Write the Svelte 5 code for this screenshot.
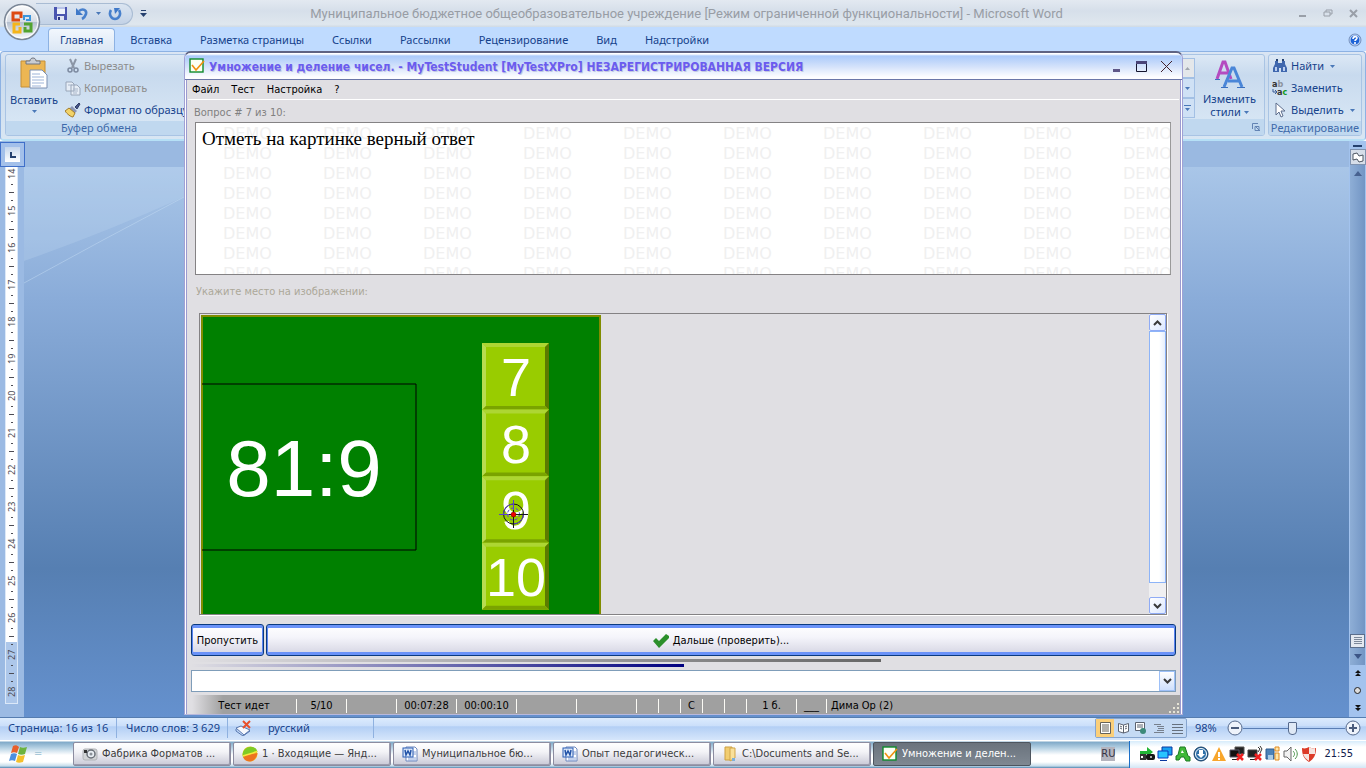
<script>
  const tabs = ['Главная', 'Вставка', 'Разметка страницы', 'Ссылки', 'Рассылки', 'Рецензирование', 'Вид', 'Надстройки'];
  const menu = ['Файл', 'Тест', 'Настройка', '?'];
  const rulerMarks = Array.from({ length: 15 }, (_, i) => 14 + i);
  const demos = Array.from({ length: 80 });
  const answers = [7, 8, 9, 10];

  const cells = [
    { text: 'Тест идет', width: 105 },
    { text: '5/10', width: 50 },
    { text: '', width: 50 },
    { text: '00:07:28', width: 60 },
    { text: '00:00:10', width: 60 },
    { text: '', width: 60 },
    { text: '', width: 60 },
    { text: '', width: 22 },
    { text: '', width: 22 },
    { text: 'С', width: 22 },
    { text: '', width: 22 },
    { text: '', width: 22 },
    { text: '1 б.', width: 50 },
    { text: '___', width: 30 }
  ];

  const tasks = [
    { icon: 'camera', text: 'Фабрика Форматов ...' },
    { icon: 'yandex', text: '1 · Входящие — Янд...' },
    { icon: 'word', text: 'Муниципальное бю...' },
    { icon: 'word', text: 'Опыт педагогическ...' },
    { icon: 'folder', text: 'C:\\Documents and Se...' },
    { icon: 'test', text: 'Умножение и делен...' }
  ];

  let activeTab = $state('Главная');
  let activeTask = $state(5);
  let zoom = $state(98);
  let timeUsed = $state(70);
  let done = $state(50);
</script>

{#snippet down()}
  <svg class="down" width="5" height="3" viewBox="0 0 5 3"><path d="M0 0h5L2.500 3z" fill="#4a78b8" /></svg>
{/snippet}

{#snippet testIcon()}
  <svg width="16" height="16" viewBox="0 0 16 16">
    <rect x="1" y="1" width="13" height="13" fill="#fbfff4" stroke="#0f8a2c" stroke-width="1.400" />
    <path d="M3 7l4 5 8-9" fill="none" stroke="#f09010" stroke-width="1.600" />
  </svg>
{/snippet}

{#snippet chevron(d)}
  <svg width="9" height="6" viewBox="0 0 9 6"><path {d} fill="none" stroke="#3a3a3a" stroke-width="2" /></svg>
{/snippet}

<div class="desktop">
  <section class="word">
    <header class="word-title">
      <div class="quick">
        <button aria-label="Сохранить">
          <svg width="15" height="15" viewBox="0 0 15 15">
            <path d="M1 1h13v13H2L1 13z" fill="#4a55b0" />
            <path d="M4 1h8v7H4z" fill="#eef2fb" /><path d="M4 1h8v2H4z" fill="#b9c4e8" />
            <path d="M4 10h7v4H4z" fill="#dde2f2" /><path d="M5 11h2v3H5z" fill="#2b3580" />
          </svg>
        </button>
        <button aria-label="Отменить">
          <svg width="14" height="14" viewBox="0 0 14 14">
            <path d="M4 4c4-3 8-1 7 3-1 3-2 4-4 5" fill="none" stroke="#4880cc" stroke-width="2.600" />
            <path d="M1 1v7h7z" fill="#3f78c8" />
          </svg>
        </button>
        {@render down()}
        <button aria-label="Повторить">
          <svg width="14" height="14" viewBox="0 0 14 14">
            <path d="M3 3c-3 5 1 9 4 9s7-4 4-9" fill="none" stroke="#4880cc" stroke-width="2.600" />
            <path d="M6 1h6L7 7z" fill="#3f78c8" />
          </svg>
        </button>
      </div>
      <svg class="more" width="7" height="7" viewBox="0 0 7 7"><path d="M1 0h5v1H1zM0 3h7L3.500 7z" fill="#26406e" /></svg>
      <h1>Муниципальное бюджетное общеобразовательное учреждение [Режим ограниченной функциональности] - Microsoft Word</h1>
      <div class="word-buttons">
        <button aria-label="Свернуть"><svg width="9" height="9" viewBox="0 0 9 9"><path d="M1 6h7v2H1z" fill="#999fa8" /></svg></button>
        <button aria-label="Восстановить"><svg width="10" height="9" viewBox="0 0 10 9"><path d="M3 3V1h6v4H7M1 3h6v4H1z" fill="none" stroke="#999fa8" /></svg></button>
        <button aria-label="Закрыть"><svg width="9" height="9" viewBox="0 0 9 9"><path d="M1 1l7 7M8 1L1 8" stroke="#999fa8" stroke-width="2" /></svg></button>
      </div>
    </header>

    <button class="orb" aria-label="Office">
      <svg width="38" height="38" viewBox="0 0 38 38">
        <defs>
          <linearGradient id="orb" x2="0" y2="1">
            <stop offset="0" stop-color="#fdfdfd" /><stop offset=".5" stop-color="#d5dbe4" />
            <stop offset=".51" stop-color="#b5c0cf" /><stop offset="1" stop-color="#fafcff" />
          </linearGradient>
        </defs>
        <circle cx="19" cy="19" r="17.500" fill="url(#orb)" stroke="#7b8797" stroke-width="1.500" />
        <circle cx="19" cy="19" r="16" fill="none" stroke="#fff" />
        <path d="M17 17H10V10h8v5" fill="none" stroke="#dd4a12" stroke-width="3" />
        <path d="M21 17v-4h6v4h-4" fill="none" stroke="#3c95dc" stroke-width="2" />
        <path d="M17 21h-6v8h6v-5" fill="none" stroke="#f5b51b" stroke-width="3" />
        <path d="M21 21h7v7h-6v-4" fill="none" stroke="#52a32f" stroke-width="3" />
      </svg>
    </button>

    <nav class="tabs">
      {#each tabs as tab}
        <button class:active={tab === activeTab} onclick={() => (activeTab = tab)}>{tab}</button>
      {/each}
      <button class="help" aria-label="Справка">
        <svg width="14" height="14" viewBox="0 0 14 14">
          <circle cx="7" cy="7" r="6" fill="#1c62d6" stroke="#7c93b8" />
          <circle cx="7" cy="7" r="5" fill="none" stroke="#d8e6fb" />
          <path d="M5 6c0-3 4-3 4-1 0 1.500-2 1.500-2 3M7 9v2" fill="none" stroke="#fff" stroke-width="1.600" />
        </svg>
      </button>
    </nav>

    <div class="ribbon">
      <div class="group clipboard">
        <div class="tools">
          <button class="big">
            <svg width="30" height="34" viewBox="0 0 30 34">
              <path d="M2 4h24v26H2z" fill="#ecb653" stroke="#c58f36" />
              <path d="M7 7V4h4c0-4 6-4 6 0h4v3z" fill="#c9ccd2" stroke="#6f7581" />
              <path d="M11 13h12l5 5v13H11z" fill="#fff" stroke="#7b8fb2" />
              <path d="M13 17h8M13 20h12M13 23h12M13 26h12M13 29h9" stroke="#9db4d8" />
            </svg>
            <span>Вставить</span>
            {@render down()}
          </button>
          <div class="rows">
            <button class="off">
              <svg width="16" height="16" viewBox="0 0 16 16">
                <path d="M5 1l4 9M11 1L7 10" stroke="#8c96a6" stroke-width="2" />
                <circle cx="5" cy="12" r="2" fill="none" stroke="#7d8aa0" stroke-width="1.500" /><circle cx="11" cy="12" r="2" fill="none" stroke="#7d8aa0" stroke-width="1.500" />
              </svg>Вырезать
            </button>
            <button class="off">
              <svg width="16" height="16" viewBox="0 0 16 16">
                <path d="M1 2h6l2 2v7H1zM6 5h6l3 3v7H6z" fill="#e6edf6" stroke="#98a5b8" />
                <path d="M3 5h4M8 9h5M8 11h5M8 13h4" stroke="#a9b6c9" />
              </svg>Копировать
            </button>
            <button>
              <svg width="16" height="16" viewBox="0 0 16 16">
                <path d="M10 5l4-4 1 1-3 5z" fill="#45568a" stroke="#313d66" /><path d="M7 4l5 5-2 2-6-4z" fill="#8b95b5" />
                <path d="M4 6l6 5-2 4c-2 0-6-3-8-6z" fill="#f2d369" stroke="#a27b28" />
              </svg>Формат по образцу
            </button>
          </div>
        </div>
        <div class="caption">Буфер обмена</div>
      </div>

      <div class="group styles">
        <div class="tools">
          <div class="gallery">
            <button aria-label="Вверх"><svg width="5" height="3" viewBox="0 0 5 3"><path d="M0 3h5L2.500 0z" fill="#a0a6ae" /></svg></button>
            <button aria-label="Вниз">{@render down()}</button>
            <button aria-label="Ещё"><svg width="7" height="6" viewBox="0 0 7 6"><path d="M0 0h7v1H0zM1 3h5L3.500 6z" fill="#4a78b8" /></svg></button>
          </div>
          <button class="big">
            <svg width="30" height="32" viewBox="0 0 30 32">
              <path d="M2 21L8 4h2l6 17M5 15h9" fill="none" stroke="#b44bc0" stroke-width="3" />
              <path d="M9 29l8-19h2l8 19M13 23h11" fill="none" stroke="#4a86d8" stroke-width="3" />
              <path d="M6 29.500h7M22 29.500h8M0 21.500h5" stroke="#3a70c0" />
            </svg>
            <span>Изменить</span>
            <span>стили {@render down()}</span>
          </button>
        </div>
        <div class="caption">
          <svg width="8" height="8" viewBox="0 0 8 8"><path d="M.5 6V.5H6M3 3.500h4v4H3zM4 4l4 4" fill="none" stroke="#6384b4" /></svg>
        </div>
      </div>

      <div class="group editing">
        <div class="rows">
          <button>
            <svg width="16" height="16" viewBox="0 0 16 16">
              <path d="M3 3h3v2h4V3h3v3l2 4v4H9v-4H7v4H1v-4l2-4z" fill="#3f67ae" /><path d="M4 1h2v2H4zM10 1h2v2h-2z" fill="#23406f" /><path d="M3 9h2v4H3zM11 9h2v4h-2z" fill="#b9cdf0" />
            </svg>Найти {@render down()}
          </button>
          <button>
            <svg width="16" height="16" viewBox="0 0 16 16">
              <text x="0" y="7" class="ab">a<tspan fill="#8b929c">b</tspan></text>
              <text x="5" y="15" class="ab">a<tspan fill="#159a1f">c</tspan></text>
              <path d="M1 9v3h3M3 10l2 2-2 2" fill="none" stroke="#3b5a94" />
            </svg>Заменить
          </button>
          <button>
            <svg width="16" height="16" viewBox="0 0 16 16"><path d="M4 1v12l3-3 2 5 2-1-2-5h4z" fill="#fff" stroke="#5d6d8c" /></svg>Выделить {@render down()}
          </button>
        </div>
        <div class="caption">Редактирование</div>
      </div>
    </div>

    <div class="document">
      <div class="left-strip">
        <button class="tab-stop" aria-label="Табуляция"><svg width="6" height="6" viewBox="0 0 6 6"><path d="M1 0v5h5" fill="none" stroke="#24406e" stroke-width="2" /></svg></button>
        <div class="ruler">
          {#each rulerMarks as mark}
            <span class="number">{mark}</span>
            {#if mark < 28}
              <i class="dot"></i><i class="dash"></i><i class="dot"></i>
            {/if}
          {/each}
        </div>
      </div>
      <div class="canvas">
        <svg width="160" height="120" viewBox="0 0 160 120">
          <path d="M0 94Q80 66 160 30V0H0z" fill="#c3dbf4" opacity=".25" />
          <path d="M0 116Q80 72 160 30" fill="none" stroke="#c4dcf4" opacity=".5" />
        </svg>
      </div>
      <div class="right-strip">
        <i class="split"></i>
        <button class="browse" aria-label="Линейка"><svg width="12" height="11" viewBox="0 0 12 11"><path d="M1 2l4-1 2 3 4-1v6l-4 1-2-3-4 1z" fill="#fff" stroke="#4d5662" /></svg></button>
        <div class="track">
          <svg width="8" height="5" viewBox="0 0 8 5"><path d="M0 5h8L4 0z" fill="#47618f" /></svg>
          <button class="thumb" aria-label="Прокрутка"><svg width="8" height="8" viewBox="0 0 8 8"><path d="M0 .5h8M0 2.500h8M0 4.500h8M0 6.500h8" stroke="#7c889a" /></svg></button>
          <svg width="8" height="5" viewBox="0 0 8 5"><path d="M0 0h8L4 5z" fill="#3c5586" /></svg>
        </div>
        <div class="pages">
          <svg width="6" height="7" viewBox="0 0 6 7"><path d="M0 3h6L3 0zM0 6h6L3 3z" fill="#111" /></svg>
          <svg width="7" height="7" viewBox="0 0 7 7"><circle cx="3.500" cy="3.500" r="3" fill="#ddd" stroke="#222" /></svg>
          <svg width="6" height="7" viewBox="0 0 6 7"><path d="M0 1h6L3 4zM0 4h6L3 7z" fill="#111" /></svg>
        </div>
      </div>
    </div>

    <footer class="word-status">
      <span class="page">Страница: 16 из 16</span>
      <span class="words">Число слов: 3 629</span>
      <span class="lang">
        <svg width="17" height="16" viewBox="0 0 17 16">
          <path d="M1 8l5-2 9 4-6 5z" fill="#f6f8fd" stroke="#5776ae" /><path d="M1 9v2l7 5 7-5" fill="none" stroke="#5776ae" />
          <path d="M8 1l7 7M15 1L8 8" stroke="#e8502c" stroke-width="2" />
        </svg>
        русский
      </span>
      <div class="views">
        <button class="on" aria-label="Разметка страницы"><svg width="11" height="12" viewBox="0 0 11 12"><path d="M.5.5h10v11H.5zM2 3h7M2 5h7M2 7h7M2 9h7" fill="#fff" stroke="#66625a" /></svg></button>
        <button aria-label="Режим чтения"><svg width="11" height="12" viewBox="0 0 11 12"><path d="M.5 1.500L5.500 3l5-1.500v8L5.500 11l-5-1.500zM5.500 3v8M2 4l2 1M2 6l2 1M7 5l2-1M7 7l2-1" fill="#fff" stroke="#5b6270" /></svg></button>
        <button aria-label="Веб-документ"><svg width="12" height="12" viewBox="0 0 12 12"><path d="M.5.5h9v8h-9zM2 3h6M2 5h6" fill="#fff" stroke="#5b6270" /><circle cx="8" cy="9" r="3" fill="#3d8a7a" /></svg></button>
        <button aria-label="Структура"><svg width="11" height="11" viewBox="0 0 11 11"><path d="M0 1.500h7M3 3.500h7M4 5.500h6M3 7.500h7M0 9.500h10" stroke="#77808d" fill="none" /></svg></button>
        <button aria-label="Черновик"><svg width="11" height="11" viewBox="0 0 11 11"><path d="M0 1.500h11M0 4.500h11M0 7.500h11M0 10.500h11" stroke="#66707e" fill="none" /></svg></button>
      </div>
      <span class="percent">98%</span>
      <button class="round" aria-label="Уменьшить"><svg width="16" height="16" viewBox="0 0 16 16"><circle cx="8" cy="8" r="7" fill="#eef3fb" stroke="#55698c" /><path d="M4 8h8" stroke="#4b5c7c" stroke-width="2" /></svg></button>
      <input class="zoom" type="range" min="10" max="190" aria-label="Масштаб" bind:value={zoom} />
      <button class="round" aria-label="Увеличить"><svg width="16" height="16" viewBox="0 0 16 16"><circle cx="8" cy="8" r="7" fill="#eef3fb" stroke="#55698c" /><path d="M4 8h8M8 4v8" stroke="#4b5c7c" stroke-width="2" /></svg></button>
    </footer>
  </section>

  <section class="test">
    <header class="test-title">
      {@render testIcon()}
      <h2>Умножение и деление чисел. - MyTestStudent [MyTestXPro] НЕЗАРЕГИСТРИРОВАННАЯ ВЕРСИЯ</h2>
      <button aria-label="Свернуть"><svg width="13" height="13" viewBox="0 0 13 13"><path d="M3 9h7v3H3z" fill="#5f5788" /></svg></button>
      <button aria-label="Развернуть"><svg width="13" height="13" viewBox="0 0 13 13"><path d="M1.500 1.500h10v10h-10z" fill="none" stroke="#15152e" /><path d="M1 1h11v3H1z" fill="#4a4478" /></svg></button>
      <button aria-label="Закрыть"><svg width="13" height="13" viewBox="0 0 13 13"><path d="M1 1l11 11M12 1L1 12" stroke="#43222c" /></svg></button>
    </header>

    <nav class="menu">
      {#each menu as item}
        <button>{item}</button>
      {/each}
    </nav>

    <main>
      <p class="count">Вопрос # 7 из 10:</p>
      <div class="question">
        <div class="demos" aria-hidden="true">
          {#each demos as _}
            <span>DEMO</span>
          {/each}
        </div>
        <p>Отметь на картинке верный ответ</p>
      </div>
      <p class="hint">Укажите место на изображении:</p>

      <div class="picture">
        <svg class="board" width="400" height="299" viewBox="0 0 400 299">
          <rect width="400" height="310" fill="#808c00" />
          <rect x="2" y="2" width="396" height="300" fill="#008000" />
          <path d="M1 69h214v166H1" fill="none" stroke="#000" />
          <text x="103" y="181" class="task">81:9</text>
          {#each answers as answer, i}
            <g transform="translate(281 {28 + i * 66.6})">
              <rect width="67" height="67" fill="#99cc00" />
              <path d="M0 0h67l-4 4H4z" fill="#add633" />
              <path d="M0 0l4 4v59l-4 4z" fill="#b8dc50" />
              <path d="M67 0v67l-4-4V4z" fill="#5c7a00" />
              <path d="M0 67l4-4h59l4 4z" fill="#7aa300" />
              <text x="34" y="53" class="answer">{answer}</text>
            </g>
          {/each}
          <g fill="none" stroke="#15151f">
            <circle cx="312.500" cy="199" r="10" /><circle cx="312.500" cy="199" r="10" stroke="#5a3fd0" stroke-dasharray="16 15" />
            <circle cx="312.500" cy="199" r="6" stroke="#5a3fd0" stroke-dasharray="3 2" />
            <path d="M298 199.500h29M312.500 185v28" />
            <path d="M298 199.500h10M312.500 185v10" stroke="#5a3fd0" />
          </g>
          <circle cx="312.500" cy="199.500" r="2.500" fill="#f00000" stroke="#500" stroke-width=".5" />
        </svg>
        <div class="scroll">
          <button aria-label="Вверх">{@render chevron('M1 5l3.500-3.500L8 5')}</button>
          <div class="bar"></div>
          <button aria-label="Вниз">{@render chevron('M1 1l3.500 3.500L8 1')}</button>
        </div>
      </div>

      <div class="actions">
        <button>Пропустить</button>
        <button class="next">
          <svg width="16" height="14" viewBox="0 0 16 14"><path d="M0 7l3-3 3 3 7-7 3 2v2L6 14z" fill="#2b8f2b" /></svg>
          Дальше (проверить)...
        </button>
      </div>

      <div class="bars">
        <div class="time" style="width: {timeUsed}%"></div>
        <div class="done" style="width: {done}%"></div>
      </div>

      <div class="combo">
        <select aria-label="Сообщения"><option></option></select>
        <span>{@render chevron('M1 1l3.500 3.500L8 1')}</span>
      </div>
    </main>

    <footer class="test-status">
      {#each cells as cell}
        <span class="cell" style="width: {cell.width}px">{cell.text}</span>
      {/each}
      <span class="student">Дима Ор (2)</span>
      <svg width="12" height="12" viewBox="0 0 12 12"><path d="M9 1h2v2H9zM9 5h2v2H9zM5 5h2v2H5zM9 9h2v2H9zM5 9h2v2H5zM1 9h2v2H1z" fill="#e6e4d6" /></svg>
    </footer>
  </section>

  <footer class="taskbar">
    <button class="start" aria-label="Пуск">
      <svg width="20" height="18" viewBox="0 0 20 18">
        <path d="M4 1c2-1 4-1 6 1L8 8C6 7 4 7 2 8z" fill="#e8602c" /><path d="M11 2c2 1 4 1 7 0l-2 7c-2 1-5 1-7 0z" fill="#6db33f" />
        <path d="M2 9c2-1 4-1 6 0l-2 7c-2-1-4-1-6 0z" fill="#4d8fe0" /><path d="M9 10c2 1 4 1 7 0l-2 7c-3 1-5 1-7 0z" fill="#f5c02a" />
      </svg>
    </button>
    <span class="chev">=</span>
    <div class="tasks">
      {#each tasks as task, i}
        <button class:active={i === activeTask} onclick={() => (activeTask = i)}>
          {#if task.icon === 'camera'}
            <svg width="16" height="16" viewBox="0 0 16 16"><rect x="1" y="3" width="14" height="11" rx="2" fill="#d2d4d6" stroke="#b0b3b7" /><circle cx="9" cy="8" r="4" fill="#e9eef3" stroke="#6a7078" stroke-width="1.500" /><circle cx="9" cy="8" r="1.500" fill="#8a9098" /><path d="M2 4h3v3H2z" fill="#333" /></svg>
          {:else if task.icon === 'yandex'}
            <svg width="16" height="16" viewBox="0 0 16 16"><circle cx="8" cy="8" r="7.500" fill="#f5c92b" /><path d="M1 11C5 8 11 8 15.500 7 15 12 11 15.500 8 15.500S2 14 1 11z" fill="#ee7420" /><path d="M.5 9C1-1 14-2 15.500 6 11 7 5 8 1 11z" fill="#7fcb25" /><path d="M1 10c4-2 10-2 14-5" fill="none" stroke="#f6e83f" stroke-width="1.500" /></svg>
          {:else if task.icon === 'word'}
            <svg width="16" height="16" viewBox="0 0 16 16"><path d="M4 1h9l2 2v12H4z" fill="#fff" stroke="#6c87bd" /><path d="M11 6h3M11 8h3M6 12h8M6 14h8" stroke="#8aa4d8" /><rect x="1" y="2" width="10" height="9" fill="#dce8fa" stroke="#2d5fb4" /><path d="M3 4l1 5 2-4 2 4 1-5" fill="none" stroke="#2353a8" stroke-width="1.500" /></svg>
          {:else if task.icon === 'folder'}
            <svg width="16" height="16" viewBox="0 0 16 16"><path d="M3 1h7v13H3z" fill="#f2cd70" stroke="#cc9f40" /><path d="M8 2h5v10l-5 3z" fill="#f9e09a" stroke="#d1a548" /><path d="M10 12h3v3h-3z" fill="#7db0da" /></svg>
          {:else}
            {@render testIcon()}
          {/if}
          <span>{task.text}</span>
        </button>
      {/each}
    </div>
    <span class="keyboard">RU</span>
    <div class="tray">
      <svg width="16" height="16" viewBox="0 0 16 16"><path d="M1 5h7V1l6 5-6 5V8H1z" fill="#22b536" /><path d="M1 8h6v6H1z" fill="#333" /><path d="M2 10h2v2H2z" fill="#fff" /><rect x="7" y="8" width="9" height="6" rx="2" fill="#161616" /><circle cx="12" cy="11" r="1" fill="#ddd" /></svg>
      <svg width="16" height="16" viewBox="0 0 16 16"><path d="M5 1h10v8H5z" fill="#18a0f0" stroke="#0838a0" /><path d="M1 5h10v7H1z" fill="#28c4ff" stroke="#0838c0" /><path d="M3 14h7v1H3z" fill="#0838a0" /></svg>
      <svg width="16" height="16" viewBox="0 0 16 16"><path d="M5 1h5l3 9 2 1v4h-4l-2-4H6l-2 3H1v-4l2-1z" fill="#3fb838" stroke="#1b7a24" /><path d="M6 7l1-3 2 3z" fill="#fff" /></svg>
      <svg width="16" height="16" viewBox="0 0 16 16"><circle cx="8" cy="8" r="7" fill="#2c6fa8" stroke="#173f66" /><circle cx="8" cy="8" r="5.500" fill="none" stroke="#fff" /><path d="M6 4h4v4h2l-4 4-4-4h2z" fill="#fff" /></svg>
      <svg width="16" height="16" viewBox="0 0 16 16"><path d="M8 1l7 14H1z" fill="#f8a62c" /><path d="M7 6h2v5H7zM7 12h2v2H7z" fill="#fff" /></svg>
      <svg width="16" height="16" viewBox="0 0 16 16"><path d="M6 1h9v7H6z" fill="#222" stroke="#555" /><path d="M1 4h9v7H1z" fill="#111" stroke="#556" /><path d="M3 13h5v1H3z" fill="#222" /><path d="M8 8l6 6M14 8l-6 6" stroke="#f02020" stroke-width="2.500" /></svg>
      <svg width="16" height="16" viewBox="0 0 16 16"><path d="M1 4h9v7H1z" fill="#222" stroke="#444" /><path d="M3 13h5v1H3z" fill="#222" /><path d="M11 1l2 2-2 3M13 0l2 3-2 4" fill="none" stroke="#333" /><path d="M8 8l6 6M14 8l-6 6" stroke="#f02020" stroke-width="2.500" /></svg>
      <svg width="16" height="16" viewBox="0 0 16 16"><path d="M1 3h8v10H1z" fill="#4c82b8" stroke="#2d5c90" /><path d="M10 1h4v4h-4zM10 7h4v7h-4z" fill="#ffe6a8" stroke="#e08a20" /><path d="M3 9h5v5H3z" fill="#a9cae6" /></svg>
      <svg width="16" height="16" viewBox="0 0 16 16"><path d="M1 5h3l4-4v14l-4-4H1z" fill="#f2f2f2" stroke="#666" /><path d="M10 5c2 2 2 4 0 6M12 3c3 3 3 7 0 10" fill="none" stroke="#4d944d" /></svg>
      <svg width="16" height="16" viewBox="0 0 16 16"><path d="M1 2c3 1 5 0 7-1 2 1 4 2 7 1 0 7-2 11-7 14C3 13 1 9 1 2z" fill="#dc3b28" /><path d="M8 1c2 1 4 2 6 1v6H8zM2 8h6v7C5 13 3 11 2 8z" fill="#f5e4df" /></svg>
      <time>21:55</time>
    </div>
  </footer>
</div>

<style>
  :global(body) {
    margin: 0;
  }

  .desktop {
    position: relative;
    display: flex;
    flex-direction: column;
    min-height: 100vh;
    overflow: hidden;
    font-family: 'DejaVu Sans Condensed', 'DejaVu Sans', sans-serif;
    font-size: 11px;
    line-height: 14px;
    color: #000;
  }

  button {
    margin: 0;
    padding: 0;
    border: none;
    background: none;
    color: inherit;
    font: inherit;
    white-space: nowrap;
  }

  svg {
    flex: none;
  }

  h1,
  h2,
  p {
    margin: 0;
  }

  /* Word */
  .word {
    position: relative;
    flex: 1;
    display: flex;
    flex-direction: column;
    font-family: 'Noto Sans', sans-serif;
    color: #15428b;
  }

  .word-title {
    display: flex;
    align-items: center;
    height: 27px;
    padding: 0 8px 0 36px;
    background: linear-gradient(#e3e9f1, #d6dfea 40%, #dfe7ee 90%, #cfdae4);
  }

  .quick {
    display: flex;
    align-items: center;
    gap: 7px;
    height: 20px;
    padding: 0 10px 0 17px;
    border: 1px solid #a9bcd3;
    border-left: none;
    border-radius: 0 11px 11px 0;
    background: linear-gradient(#dbe5f1, #c3d2e6);
  }

  .quick button {
    display: flex;
  }

  .more {
    margin-left: 7px;
  }

  h1 {
    flex: 1;
    padding-right: 72px;
    font-family: Roboto, sans-serif;
    font-size: 13px;
    font-weight: normal;
    line-height: 18px;
    text-align: center;
    white-space: nowrap;
    color: #989da5;
  }

  .word-buttons {
    display: flex;
    gap: 16px;
  }

  .orb {
    position: absolute;
    left: 3px;
    top: 3px;
  }

  .tabs {
    display: flex;
    height: 24px;
    padding-left: 48px;
    background: #bfdbff;
  }

  .tabs button {
    padding: 0 13px;
    border: 1px solid transparent;
    border-bottom: none;
  }

  .tabs button.active {
    padding: 0 11px;
    margin: 1px 1px 0 0;
    border-color: #8db2e3;
    border-radius: 4px 4px 0 0;
    background: linear-gradient(#f2f7fd, #dbe7f5);
  }

  .tabs .help {
    margin-left: auto;
    padding: 0 3px;
  }

  .help svg {
    display: block;
  }

  .ribbon {
    display: flex;
    gap: 3px;
    height: 90px;
    box-sizing: border-box;
    padding: 2px 3px 3px 4px;
    border: 1px solid #8db2e3;
    border-bottom: 2px solid #b6e0f6;
    border-radius: 4px;
    background: linear-gradient(#dbe6f4, #c9daed 20%, #d8e6f3);
  }

  .group {
    display: flex;
    flex-direction: column;
    border: 1px solid #a9c4e4;
    border-radius: 3px;
    background: linear-gradient(#dce8f5, #c8daee 25%, #dbe9f6);
    overflow: hidden;
  }

  .clipboard {
    width: 186px;
  }

  .styles {
    margin-left: auto;
    width: 84px;
  }

  .editing {
    width: 92px;
  }

  .tools,
  .editing .rows {
    flex: 1;
  }

  .tools {
    display: flex;
  }

  .caption {
    display: flex;
    align-items: center;
    justify-content: center;
    height: 16px;
    background: #c0d8ef;
    color: #3e6aaa;
  }

  .styles .caption {
    justify-content: end;
    padding-right: 4px;
  }

  .big {
    display: flex;
    flex-direction: column;
    align-items: center;
    width: 56px;
    padding-top: 2px;
    line-height: 13px;
  }

  .big svg:first-child {
    margin-bottom: 2px;
  }

  .styles .big {
    width: 70px;
    padding-top: 3px;
  }

  .big .down {
    margin: 4px 0 0;
  }

  .big span .down {
    margin: 0 0 2px;
  }

  .rows {
    display: flex;
    flex-direction: column;
    padding: 0 3px;
  }

  .rows button {
    display: flex;
    align-items: center;
    gap: 3px;
    height: 22px;
  }

  .rows .down {
    margin-left: 3px;
  }

  .off {
    color: #8d8d8d;
  }

  .ab {
    font: bold 9px 'DejaVu Sans Condensed', sans-serif;
    fill: #333;
  }

  .gallery {
    display: flex;
    flex-direction: column;
    padding-top: 3px;
  }

  .gallery button {
    display: flex;
    align-items: center;
    justify-content: center;
    width: 15px;
    height: 20px;
    box-sizing: border-box;
    border: 1px solid #a3c0e4;
    background: #cfe1f5;
  }

  .gallery button:first-child {
    background: #e4e7ea;
  }

  .document {
    flex: 1;
    display: flex;
    background: #9ab9e1;
  }

  .left-strip {
    width: 24px;
    background: #9bbae3;
  }

  .tab-stop {
    display: flex;
    align-items: center;
    justify-content: center;
    width: 25px;
    height: 25px;
    margin-top: 1px;
    border: 1px solid #3f6fc9;
    background: linear-gradient(#c5d6ec, #fff) center / 15px 15px no-repeat #a3c0ea;
    box-sizing: border-box;
  }

  .ruler {
    display: flex;
    flex-direction: column;
    align-items: center;
    width: 13px;
    margin-left: 5px;
    padding-bottom: 5px;
    border: 1px solid #dbe8f8;
    border-top: none;
    box-sizing: border-box;
    background: linear-gradient(to top, #adc7ea 61px, #fff 61px);
    font-size: 9px;
    line-height: 11px;
    color: #4c4c54;
  }

  .number {
    height: 13px;
    writing-mode: vertical-rl;
    rotate: 180deg;
    text-align: center;
  }

  .dot,
  .dash {
    display: flex;
    align-items: center;
    height: 8px;
  }

  .dot::before,
  .dash::before {
    content: '';
    width: 2px;
    height: 1px;
    background: #4c4c54;
  }

  .dash::before {
    width: 5px;
  }

  .canvas {
    flex: 1;
    margin-top: 26px;
    background: linear-gradient(#a9c6e8, #8aacd9 24%, #567fb2 73%, #6591ce);
  }

  .canvas svg {
    display: block;
  }

  .right-strip {
    display: flex;
    flex-direction: column;
    align-items: center;
    width: 17px;
    background: #a3c3ee;
  }

  .split {
    width: 9px;
    height: 2px;
    margin: 4px 0 2px;
    background: #24406e;
  }

  .browse {
    width: 16px;
    height: 16px;
    border: 1px solid #7f93b0;
    background: #d6dee9;
    line-height: 0;
  }

  .track {
    flex: 1;
    display: flex;
    flex-direction: column;
    align-items: center;
    width: 15px;
    padding: 6px 0;
    box-sizing: border-box;
    background: linear-gradient(to right, #8eaed6, #7295c4);
  }

  .thumb {
    display: flex;
    align-items: center;
    justify-content: center;
    width: 15px;
    height: 14px;
    margin: auto 0 6px;
    border: 1px solid #5b6e8c;
    background: #e3e8f0;
    box-sizing: border-box;
  }

  .pages {
    display: flex;
    flex-direction: column;
    align-items: center;
    gap: 10px;
    padding: 5px 0 6px;
  }

  .word-status {
    display: flex;
    align-items: center;
    height: 23px;
    box-sizing: border-box;
    border-top: 1px solid #567db0;
    padding: 0 5px 2px 0;
    background: linear-gradient(#dcebfd, #cbdffa 35%, #b3cff5 40%, #d6e6fb);
  }

  .word-status > span {
    line-height: 20px;
    white-space: nowrap;
  }

  .page,
  .words,
  .lang {
    box-sizing: border-box;
    border-right: 1px solid #8fb1e0;
    padding-left: 8px;
  }

  .page {
    width: 117px;
  }

  .words {
    width: 111px;
    padding-left: 9px;
  }

  .lang {
    display: flex;
    align-items: center;
    gap: 16px;
    width: 146px;
    padding-left: 7px;
  }

  .views {
    display: flex;
    margin-left: auto;
    border: 1px solid #86a5cf;
    border-radius: 2px;
    background: #c5daf4;
  }

  .views button {
    display: flex;
    align-items: center;
    justify-content: center;
    width: 18px;
    height: 18px;
  }

  .views .on {
    background: #fbcf7a;
  }

  .percent {
    width: 32px;
    padding-left: 8px;
  }

  .round {
    display: flex;
  }

  .zoom {
    width: 102px;
    height: 16px;
    margin: 0;
    appearance: none;
    background: linear-gradient(#5a7eb4, #5a7eb4) center / 100% 1px no-repeat;
  }

  .zoom::-webkit-slider-thumb {
    appearance: none;
    width: 9px;
    height: 13px;
    border: 1px solid #55698c;
    border-radius: 1px 1px 4px 4px;
    background: #dfe9f6;
  }

  /* MyTest window */
  .test {
    position: absolute;
    inset: 51px 183px 53px 184px;
    display: flex;
    flex-direction: column;
    box-sizing: border-box;
    border: 1px solid #5f6382;
    border-top-width: 2px;
    border-radius: 7px 7px 0 0;
    background: #e0dfe3;
    box-shadow: inset 1px 0 #fff, inset -1px 0 #fff, inset 2px 0 #9b9bd0, inset -2px 0 #9b9bd0;
    border-color: #5f6382 #a0a0d4 #b8b8dc;
  }

  .test-title {
    display: flex;
    align-items: center;
    gap: 12px;
    height: 26px;
    padding: 0 9px 0 4px;
    border-bottom: 1px solid #6a76a8;
    border-radius: 6px 6px 0 0;
    background: linear-gradient(#fff 1px, #abcafa 3px, #d5e3fb 14px, #fdfdff 24px);
  }

  h2 {
    flex: 1;
    margin-left: -8px;
    padding-top: 2px;
    font-size: 12px;
    line-height: 16px;
    white-space: nowrap;
    color: #6a5cf0;
    text-shadow: 1px 1px #c3c8e2;
  }

  .test-title button {
    display: flex;
  }

  .menu {
    display: flex;
    gap: 12px;
    height: 19px;
    margin: 0 3px;
    padding-left: 4px;
    border-bottom: 1px solid #fff;
  }

  main {
    flex: 1;
    display: flex;
    flex-direction: column;
    padding: 6px 6px 3px;
  }

  .count,
  .hint {
    padding-left: 3px;
    color: #808080;
  }

  .question {
    position: relative;
    height: 151px;
    margin: 2px 5px 0 4px;
    border: 1px solid #848284;
    border-right-color: #9a9a9a;
    background: #fff;
    overflow: hidden;
  }

  .demos {
    position: absolute;
    inset: 1px 0 0 27px;
    display: grid;
    grid-template-columns: repeat(auto-fill, 100px);
    grid-auto-rows: 20px;
    width: 1000px;
    font: 16px/20px 'DejaVu Sans', sans-serif;
    color: #f0f0f0;
  }

  .question p {
    position: relative;
    padding: 5px 6px;
    font: 19px/22px 'Liberation Serif', serif;
  }

  .hint {
    margin: 10px 0 14px;
    padding-left: 5px;
    color: #aca899;
  }

  .picture {
    flex: 1;
    display: flex;
    justify-content: space-between;
    min-height: 0;
    margin: 0 9px 0 8px;
    border: 1px solid #848284;
    box-shadow: 1px 1px #fff;
    overflow: hidden;
  }

  .board {
    margin: 1px 0 -100px 1px;
  }

  .task,
  .answer {
    font-family: 'Liberation Sans', sans-serif;
    font-size: 80px;
    text-anchor: middle;
    fill: #fff;
  }

  .answer {
    font-size: 54px;
  }

  .scroll {
    display: flex;
    flex-direction: column;
    width: 17px;
    background: #f0f0f2;
  }

  .scroll button {
    display: flex;
    align-items: center;
    justify-content: center;
    height: 17px;
    border: 1px solid #8fabf5;
    border-radius: 2px;
    background: linear-gradient(135deg, #fff, #dce8ff);
  }

  .bar {
    flex: 1;
    margin-bottom: 14px;
    border: 1px solid #8db4f8;
    background: linear-gradient(to right, #fff 60%, #e6effc);
  }

  .actions {
    display: flex;
    gap: 2px;
    margin-top: 9px;
  }

  .actions button {
    display: flex;
    align-items: center;
    justify-content: center;
    gap: 4px;
    height: 32px;
    width: 73px;
    padding-top: 2px;
    border: 1px solid #0a3a80;
    border-radius: 3px;
    background: linear-gradient(#fff, #f5f5fb 40%, #d4d4e2);
    box-shadow: inset 0 3px #6a92f8, inset 0 -3px #6a92f8, inset 1px 0 #5a84f0, inset -1px 0 #5a84f0;
  }

  .actions .next {
    flex: 1;
  }

  .bars {
    display: flex;
    flex-direction: column;
    gap: 2px;
    padding: 3px 0;
  }

  .bars div {
    height: 3px;
  }

  .time {
    background: linear-gradient(to right, #e0dfe3, #666);
  }

  .done {
    background: linear-gradient(to right, #e0dfe3, #000080);
  }

  .combo {
    display: grid;
    border: 1px solid #7f9db9;
    background: #fff;
  }

  .combo select,
  .combo span {
    grid-area: 1 / 1;
  }

  .combo select {
    height: 20px;
    border: none;
    background: #fff;
    appearance: none;
  }

  .combo span {
    display: flex;
    align-items: center;
    justify-content: center;
    justify-self: end;
    width: 16px;
    box-sizing: border-box;
    border: 1px solid #9dc0f8;
    background: linear-gradient(#fff, #cfe0fc);
    pointer-events: none;
  }

  .test-status {
    display: flex;
    align-items: center;
    height: 19px;
    box-sizing: border-box;
    margin: 0 2px;
    padding: 3px 0 0 5px;
    background: linear-gradient(to right, #e0dfe3 5px, #a0a0a0 36px);
  }

  .cell {
    box-sizing: border-box;
    height: 14px;
    border-right: 1px solid #fbfaf5;
    text-align: center;
    white-space: nowrap;
  }

  .student {
    flex: 1;
    padding-left: 4px;
  }

  .test-status svg {
    align-self: end;
  }

  /* Taskbar */
  .taskbar {
    display: flex;
    align-items: center;
    height: 28px;
    background: linear-gradient(#fff 1px, #7fa9c8 2px, #b7d2e4 8px, #fff 15px, #fff 22px, #c5dcea 26px, #4f86b0);
    color: #3c3c3c;
  }

  .start {
    width: 30px;
    padding-left: 9px;
    line-height: 0;
    text-align: left;
  }

  .chev {
    width: 34px;
    padding-left: 4px;
    box-sizing: border-box;
    color: #a8c8d8;
  }

  .tasks {
    flex: 0 1 958px;
    display: grid;
    grid-template-columns: repeat(6, 1fr);
    gap: 2px;
    margin-left: 9px;
  }

  .tasks button {
    display: flex;
    align-items: center;
    gap: 4px;
    min-width: 0;
    height: 24px;
    padding: 0 8px;
    border: 1px solid #8c8ca0;
    border-radius: 2px;
    background: linear-gradient(#fff, #f3f3f7 40%, #c9c9d6);
    box-shadow: inset -1px -1px #9c9cae;
    overflow: hidden;
  }

  .tasks .active {
    border-color: #4d555f;
    background: linear-gradient(#6a737d, #7f8892);
    box-shadow: none;
    color: #fff;
  }

  .keyboard {
    margin: 0 14px 0 auto;
    background: #b4b4be;
    color: #334;
  }

  .tray {
    display: flex;
    align-items: center;
    gap: 2px;
    height: 27px;
    padding: 0 13px 0 9px;
    border-left: 1px solid #1c6fc8;
    background: linear-gradient(#d7ecfb, #fff 6px, #fff 20px, #d3e6f5);
    color: #10204c;
  }

  time {
    margin-left: 5px;
  }
</style>
